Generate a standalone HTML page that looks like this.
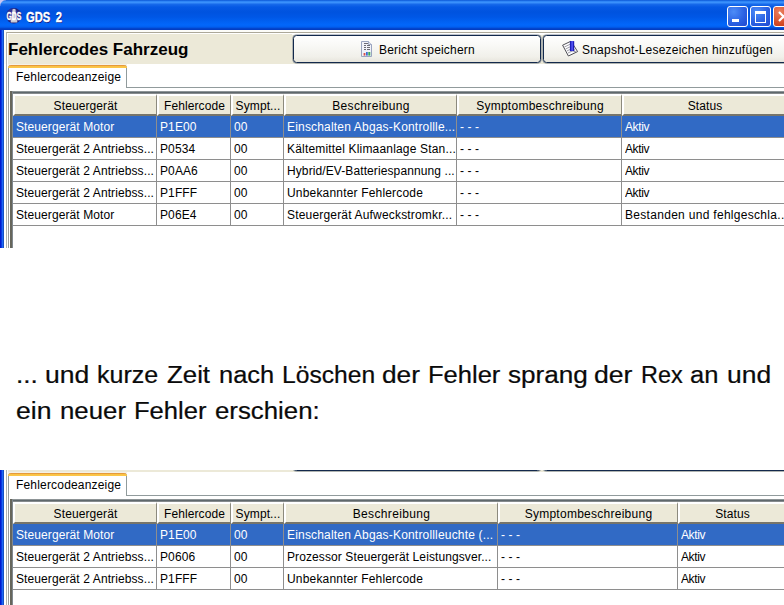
<!DOCTYPE html>
<html lang="de">
<head>
<meta charset="utf-8">
<title>GDS 2</title>
<style>
html,body{margin:0;padding:0;}
body{width:784px;height:605px;overflow:hidden;background:#fff;position:relative;font-family:"Liberation Sans",sans-serif;font-size:12px;color:#000;}
.abs{position:absolute;}
.shot{position:absolute;left:0;width:784px;overflow:hidden;background:#fff;}
#shot1{top:0;height:248px;}
#shot2{top:470px;height:135px;}
.inner{position:absolute;left:0;width:800px;height:260px;}
#shot1 .inner{top:0;}
#shot2 .inner{top:-62px;}
.titlebar{position:absolute;left:0;top:0;width:800px;height:30px;
 background:linear-gradient(180deg,#0a56d6 0px,#2f86f6 1.5px,#3a90fb 2.5px,#1568ea 4.5px,#0559e4 7px,#0053df 12px,#0057e6 17px,#0162f3 22px,#0267fb 25px,#025ff0 27px,#0345cc 28.5px,#0339bd 30px);}
.corner{position:absolute;left:0;top:0;width:6px;height:6px;background:radial-gradient(circle at 6px 6px,rgba(255,255,255,0) 5.2px,#c9c6f2 6.4px);}
.lborder{position:absolute;left:0;top:30px;width:4px;height:230px;background:linear-gradient(90deg,#0019cf 0,#0019cf 1px,#0a3ade 1px,#0a3ade 2px,#1f66f5 2px,#1f66f5 3px,#1450c4 3px,#1450c4 4px);}
.title{position:absolute;left:26px;top:9px;font-weight:bold;font-size:14px;color:#fff;text-shadow:1px 1px 0 #0a1883;white-space:nowrap;line-height:16px;word-spacing:3px;transform:scaleX(0.80);-webkit-text-stroke:0.35px #fff;transform-origin:0 0;}
.cbtn{position:absolute;top:6px;width:19px;height:19px;border:1px solid #fff;border-radius:3px;
 background:radial-gradient(circle at 30% 25%,#4d8cf7 0,#2b62e3 55%,#1f48cf 100%);}
.cbtn.close{background:radial-gradient(circle at 30% 25%,#ea8060 0,#d8502c 55%,#b8300e 100%);}
.client{position:absolute;left:4px;top:30px;width:796px;height:34px;background:#ece9d8;box-shadow:inset 2px 2px 0 #fcfcf8;}
.pane{position:absolute;left:4px;top:64px;width:796px;height:200px;background:#fff;}
.h1{position:absolute;left:8px;top:40px;font-weight:bold;font-size:17px;line-height:20px;white-space:nowrap;}
.btn{position:absolute;top:35px;height:26px;border:1px solid #13294c;border-radius:3.5px;box-shadow:0 0 0 0.5px rgba(19,41,76,0.55);background:linear-gradient(180deg,#ffffff 0,#f8f8f5 40%,#f1f0ea 80%,#e7e5dc 100%);}
.btn span{position:absolute;top:7px;line-height:14px;white-space:nowrap;letter-spacing:0.18px;}
.tab{position:absolute;left:8px;top:65px;width:119px;height:23px;background:#fff;border-right:1px solid #919b9c;border-left:1px solid #919b9c;box-sizing:border-box;border-radius:3px 3px 0 0;}
.tab:before{content:"";position:absolute;left:-1px;top:0;width:119px;height:3px;border-radius:3px 3px 0 0;background:linear-gradient(180deg,#e59a3c 0,#e59a3c 1px,#f9c144 1px,#fcc84a 3px);}
.tab span{position:absolute;left:7px;top:5px;line-height:14px;white-space:nowrap;letter-spacing:0.18px;}
.hdr{position:absolute;top:94px;height:22px;box-sizing:border-box;background:#ece9d8;border-left:2px solid #fff;border-top:2px solid #fff;border-bottom:2px solid #77756a;border-right:1px solid #8c8a7e;text-align:center;line-height:20px;white-space:nowrap;overflow:hidden;letter-spacing:0.1px;}
.vl{position:absolute;width:1px;background:#8e8e8e;}
.hl{position:absolute;left:13px;width:790px;height:1px;background:#8e8e8e;}
.row{position:absolute;left:13px;width:790px;height:21px;}
.sel{background:#316ac5;color:#fff;}
.c{position:absolute;top:0;line-height:22px;height:22px;white-space:nowrap;overflow:hidden;letter-spacing:0.1px;}
.para{position:absolute;font-size:26px;line-height:36px;white-space:nowrap;transform-origin:0 100%;color:#0a0a0a;-webkit-text-stroke:0.25px #0a0a0a;}
</style>
</head>
<body>
<div class="shot" id="shot1"><div class="inner">
<div class="titlebar"></div><div class="corner"></div><div class="lborder"></div>
<svg class="abs" style="left:5px;top:7px" width="18" height="18" viewBox="0 0 18 18">
   <circle cx="8.8" cy="8.7" r="7.7" fill="#20227e"/>
   <circle cx="7.5" cy="7" r="5.5" fill="#3b40a8" opacity="0.55"/>
   <path d="M7.4 2.4 Q9 1 10.6 2.4 L10.8 11 L12.4 13 L12.2 15.6 L5.8 15.6 L5.6 13 L7.2 11 Z" fill="#c9c9d4"/>
   <text x="8.9" y="12.9" font-family="Liberation Sans, sans-serif" font-weight="bold" font-size="10.6" fill="#fff" stroke="#fff" stroke-width="0.35" text-anchor="middle" textLength="14.8" lengthAdjust="spacingAndGlyphs">GDS</text>
  </svg>
<div class="title">GDS 2</div>
<div class="cbtn" style="left:727px"><i class="abs" style="left:4px;top:12px;width:7px;height:3px;background:#fff"></i></div>
<div class="cbtn" style="left:750px"><i class="abs" style="left:4px;top:4px;width:9px;height:8px;border:1px solid #fff;border-top-width:3px;box-sizing:content-box"></i></div>
<div class="cbtn close" style="left:773px"><svg class="abs" style="left:3px;top:3px" width="13" height="13"><path d="M2 2 L11 11 M11 2 L2 11" stroke="#fff" stroke-width="2.2"/></svg></div>
<div class="client"></div><div class="pane"></div>
<div class="abs" style="left:6px;top:32px;width:800px;height:1px;background:#aca899"></div>
<div class="abs" style="left:6px;top:32px;width:1px;height:230px;background:#b3b3b0"></div>
<div class="abs" style="left:7px;top:33px;width:800px;height:1px;background:#fff"></div>
<div class="abs" style="left:7px;top:33px;width:1px;height:31px;background:#fff"></div>
<div class="abs" style="left:8px;top:88px;width:1px;height:180px;background:#9a9c9c"></div>
<div class="abs" style="left:292px;top:34px;width:520px;height:1px;background:#fbfbf8"></div>
<div class="h1">Fehlercodes Fahrzeug</div>
<div class="btn" style="left:293px;width:246px"><svg class="abs" style="left:67px;top:5px" width="12" height="17" viewBox="0 0 12 17">
    <path d="M0.5 0.5 H7.5 L10.5 3.5 V15.5 H0.5 Z" fill="#f1f2f9" stroke="#9aa4c0"/>
    <path d="M7.5 0.5 V3.5 H10.5" fill="#dfe3f0" stroke="#8f9ab8" stroke-width="0.8"/>
    <path d="M3 2.5 H7 M3 4.5 H5 M6 4.5 H9 M3 6.5 H5 M6 6.5 H9 M3 8.5 H5 M6 8.5 H9" stroke="#6a6a74" stroke-width="1"/>
    <rect x="2.6" y="12" width="1.8" height="2.6" fill="#d8504a"/><rect x="5" y="11" width="1.8" height="3.6" fill="#3f6fd0"/><rect x="7.3" y="11" width="2" height="3.6" fill="#3cab54"/>
   </svg><span style="left:85px">Bericht speichern</span></div>
<div class="btn" style="left:543px;width:260px"><svg class="abs" style="left:18px;top:4px" width="18" height="18" viewBox="0 0 18 18">
    <path d="M0.6 5.2 L9 1.2 L15.6 11.6 L6.4 16 Z" fill="#fbfbfd" stroke="#3c3c44" stroke-width="0.9"/>
    <path d="M2.4 7 L8 4.3 M3.6 9 L9.2 6.3 M4.8 11 L10.4 8.3 M6 13 L13 9.7" stroke="#8a8a94" stroke-width="0.8"/>
    <path d="M11 10.5 L14.6 11.2 L12 12.6 Z" fill="#9a9aa4"/>
    <rect x="7.9" y="1.1" width="4.3" height="10" fill="#1d1db8"/>
    <rect x="9.3" y="1.1" width="1.6" height="9.6" fill="#5656f4"/>
   </svg><span style="left:38px;letter-spacing:0.22px">Snapshot-Lesezeichen hinzufügen</span></div>
<div class="abs" style="left:126px;top:87px;width:700px;height:1px;background:#919b9c"></div>
<div class="abs" style="left:8px;top:64px;width:119px;height:1px;background:#f5f1e6"></div>
<div class="tab"><span>Fehlercodeanzeige</span></div>
<div class="abs" style="left:10px;top:91px;width:800px;height:3px;background:linear-gradient(180deg,#8d9496 0,#8d9496 1px,#5f686c 1px,#5f686c 2px,#858a8c 2px,#858a8c 3px)"></div>
<div class="abs" style="left:10px;top:91px;width:3px;height:180px;background:linear-gradient(90deg,#66665c 0,#66665c 2px,#80888e 2px,#80888e 3px)"></div>
<div class="hdr" style="left:13px;width:144px">Steuergerät</div>
<div class="hdr" style="left:157px;width:74px">Fehlercode</div>
<div class="hdr" style="left:231px;width:53px">Sympt...</div>
<div class="hdr" style="left:284px;width:173px;letter-spacing:0.35px">Beschreibung</div>
<div class="hdr" style="left:457px;width:165px;letter-spacing:0.26px">Symptombeschreibung</div>
<div class="hdr" style="left:622px;width:165px">Status</div>
<div class="row sel" style="top:116px">
<span class="c" style="left:3px;width:140px">Steuergerät Motor</span>
<span class="c" style="left:147px;width:70px">P1E00</span>
<span class="c" style="left:221px;width:49px">00</span>
<span class="c" style="left:274px;width:169px;letter-spacing:0.18px">Einschalten Abgas-Kontrollle...</span>
<span class="c" style="left:447px;width:161px">- - -</span>
<span class="c" style="left:612px;width:161px;letter-spacing:-0.4px">Aktiv</span>
</div>
<div class="hl" style="top:137px"></div>
<div class="row" style="top:138px">
<span class="c" style="left:3px;width:140px">Steuergerät 2 Antriebss...</span>
<span class="c" style="left:147px;width:70px">P0534</span>
<span class="c" style="left:221px;width:49px">00</span>
<span class="c" style="left:274px;width:169px;letter-spacing:0.18px">Kältemittel Klimaanlage Stan...</span>
<span class="c" style="left:447px;width:161px">- - -</span>
<span class="c" style="left:612px;width:161px;letter-spacing:-0.4px">Aktiv</span>
</div>
<div class="hl" style="top:159px"></div>
<div class="row" style="top:160px">
<span class="c" style="left:3px;width:140px">Steuergerät 2 Antriebss...</span>
<span class="c" style="left:147px;width:70px">P0AA6</span>
<span class="c" style="left:221px;width:49px">00</span>
<span class="c" style="left:274px;width:169px">Hybrid/EV-Batteriespannung ...</span>
<span class="c" style="left:447px;width:161px">- - -</span>
<span class="c" style="left:612px;width:161px;letter-spacing:-0.4px">Aktiv</span>
</div>
<div class="hl" style="top:181px"></div>
<div class="row" style="top:182px">
<span class="c" style="left:3px;width:140px">Steuergerät 2 Antriebss...</span>
<span class="c" style="left:147px;width:70px">P1FFF</span>
<span class="c" style="left:221px;width:49px">00</span>
<span class="c" style="left:274px;width:169px;letter-spacing:0.18px">Unbekannter Fehlercode</span>
<span class="c" style="left:447px;width:161px">- - -</span>
<span class="c" style="left:612px;width:161px;letter-spacing:-0.4px">Aktiv</span>
</div>
<div class="hl" style="top:203px"></div>
<div class="row" style="top:204px">
<span class="c" style="left:3px;width:140px">Steuergerät Motor</span>
<span class="c" style="left:147px;width:70px">P06E4</span>
<span class="c" style="left:221px;width:49px">00</span>
<span class="c" style="left:274px;width:169px;letter-spacing:0.18px">Steuergerät Aufweckstromkr...</span>
<span class="c" style="left:447px;width:161px">- - -</span>
<span class="c" style="left:612px;width:161px;letter-spacing:0.3px">Bestanden und fehlgeschla...</span>
</div>
<div class="hl" style="top:225px"></div>
<div class="vl" style="left:156px;top:116px;height:109px"></div>
<div class="vl" style="left:230px;top:116px;height:109px"></div>
<div class="vl" style="left:283px;top:116px;height:109px"></div>
<div class="vl" style="left:456px;top:116px;height:109px"></div>
<div class="vl" style="left:621px;top:116px;height:109px"></div>
</div></div>
<div class="shot" id="shot2"><div class="inner">
<div class="titlebar"></div><div class="corner"></div><div class="lborder"></div>
<svg class="abs" style="left:5px;top:7px" width="18" height="18" viewBox="0 0 18 18">
   <circle cx="8.8" cy="8.7" r="7.7" fill="#20227e"/>
   <circle cx="7.5" cy="7" r="5.5" fill="#3b40a8" opacity="0.55"/>
   <path d="M7.4 2.4 Q9 1 10.6 2.4 L10.8 11 L12.4 13 L12.2 15.6 L5.8 15.6 L5.6 13 L7.2 11 Z" fill="#c9c9d4"/>
   <text x="8.9" y="12.9" font-family="Liberation Sans, sans-serif" font-weight="bold" font-size="10.6" fill="#fff" stroke="#fff" stroke-width="0.35" text-anchor="middle" textLength="14.8" lengthAdjust="spacingAndGlyphs">GDS</text>
  </svg>
<div class="title">GDS 2</div>
<div class="cbtn" style="left:727px"><i class="abs" style="left:4px;top:12px;width:7px;height:3px;background:#fff"></i></div>
<div class="cbtn" style="left:750px"><i class="abs" style="left:4px;top:4px;width:9px;height:8px;border:1px solid #fff;border-top-width:3px;box-sizing:content-box"></i></div>
<div class="cbtn close" style="left:773px"><svg class="abs" style="left:3px;top:3px" width="13" height="13"><path d="M2 2 L11 11 M11 2 L2 11" stroke="#fff" stroke-width="2.2"/></svg></div>
<div class="client"></div><div class="pane"></div>
<div class="abs" style="left:6px;top:32px;width:800px;height:1px;background:#aca899"></div>
<div class="abs" style="left:6px;top:32px;width:1px;height:230px;background:#b3b3b0"></div>
<div class="abs" style="left:7px;top:33px;width:800px;height:1px;background:#fff"></div>
<div class="abs" style="left:7px;top:33px;width:1px;height:31px;background:#fff"></div>
<div class="abs" style="left:8px;top:88px;width:1px;height:180px;background:#9a9c9c"></div>
<div class="abs" style="left:292px;top:34px;width:520px;height:1px;background:#fbfbf8"></div>
<div class="h1">Fehlercodes Fahrzeug</div>
<div class="btn" style="left:293px;width:246px"><svg class="abs" style="left:67px;top:5px" width="12" height="17" viewBox="0 0 12 17">
    <path d="M0.5 0.5 H7.5 L10.5 3.5 V15.5 H0.5 Z" fill="#f1f2f9" stroke="#9aa4c0"/>
    <path d="M7.5 0.5 V3.5 H10.5" fill="#dfe3f0" stroke="#8f9ab8" stroke-width="0.8"/>
    <path d="M3 2.5 H7 M3 4.5 H5 M6 4.5 H9 M3 6.5 H5 M6 6.5 H9 M3 8.5 H5 M6 8.5 H9" stroke="#6a6a74" stroke-width="1"/>
    <rect x="2.6" y="12" width="1.8" height="2.6" fill="#d8504a"/><rect x="5" y="11" width="1.8" height="3.6" fill="#3f6fd0"/><rect x="7.3" y="11" width="2" height="3.6" fill="#3cab54"/>
   </svg><span style="left:85px">Bericht speichern</span></div>
<div class="btn" style="left:543px;width:260px"><svg class="abs" style="left:18px;top:4px" width="18" height="18" viewBox="0 0 18 18">
    <path d="M0.6 5.2 L9 1.2 L15.6 11.6 L6.4 16 Z" fill="#fbfbfd" stroke="#3c3c44" stroke-width="0.9"/>
    <path d="M2.4 7 L8 4.3 M3.6 9 L9.2 6.3 M4.8 11 L10.4 8.3 M6 13 L13 9.7" stroke="#8a8a94" stroke-width="0.8"/>
    <path d="M11 10.5 L14.6 11.2 L12 12.6 Z" fill="#9a9aa4"/>
    <rect x="7.9" y="1.1" width="4.3" height="10" fill="#1d1db8"/>
    <rect x="9.3" y="1.1" width="1.6" height="9.6" fill="#5656f4"/>
   </svg><span style="left:38px;letter-spacing:0.22px">Snapshot-Lesezeichen hinzufügen</span></div>
<div class="abs" style="left:126px;top:87px;width:700px;height:1px;background:#919b9c"></div>
<div class="abs" style="left:8px;top:64px;width:119px;height:1px;background:#f5f1e6"></div>
<div class="tab"><span>Fehlercodeanzeige</span></div>
<div class="abs" style="left:10px;top:91px;width:800px;height:3px;background:linear-gradient(180deg,#8d9496 0,#8d9496 1px,#5f686c 1px,#5f686c 2px,#858a8c 2px,#858a8c 3px)"></div>
<div class="abs" style="left:10px;top:91px;width:3px;height:180px;background:linear-gradient(90deg,#66665c 0,#66665c 2px,#80888e 2px,#80888e 3px)"></div>
<div class="hdr" style="left:13px;width:144px">Steuergerät</div>
<div class="hdr" style="left:157px;width:74px">Fehlercode</div>
<div class="hdr" style="left:231px;width:53px">Sympt...</div>
<div class="hdr" style="left:284px;width:214px;letter-spacing:0.35px">Beschreibung</div>
<div class="hdr" style="left:498px;width:180px;letter-spacing:0.26px">Symptombeschreibung</div>
<div class="hdr" style="left:678px;width:108px">Status</div>
<div class="row sel" style="top:116px">
<span class="c" style="left:3px;width:140px">Steuergerät Motor</span>
<span class="c" style="left:147px;width:70px">P1E00</span>
<span class="c" style="left:221px;width:49px">00</span>
<span class="c" style="left:274px;width:210px;letter-spacing:0.18px">Einschalten Abgas-Kontrollleuchte (...</span>
<span class="c" style="left:488px;width:176px">- - -</span>
<span class="c" style="left:668px;width:104px;letter-spacing:-0.4px">Aktiv</span>
</div>
<div class="hl" style="top:137px"></div>
<div class="row" style="top:138px">
<span class="c" style="left:3px;width:140px">Steuergerät 2 Antriebss...</span>
<span class="c" style="left:147px;width:70px">P0606</span>
<span class="c" style="left:221px;width:49px">00</span>
<span class="c" style="left:274px;width:210px">Prozessor Steuergerät Leistungsver...</span>
<span class="c" style="left:488px;width:176px">- - -</span>
<span class="c" style="left:668px;width:104px;letter-spacing:-0.4px">Aktiv</span>
</div>
<div class="hl" style="top:159px"></div>
<div class="row" style="top:160px">
<span class="c" style="left:3px;width:140px">Steuergerät 2 Antriebss...</span>
<span class="c" style="left:147px;width:70px">P1FFF</span>
<span class="c" style="left:221px;width:49px">00</span>
<span class="c" style="left:274px;width:210px;letter-spacing:0.18px">Unbekannter Fehlercode</span>
<span class="c" style="left:488px;width:176px">- - -</span>
<span class="c" style="left:668px;width:104px;letter-spacing:-0.4px">Aktiv</span>
</div>
<div class="hl" style="top:181px"></div>
<div class="vl" style="left:156px;top:116px;height:65px"></div>
<div class="vl" style="left:230px;top:116px;height:65px"></div>
<div class="vl" style="left:283px;top:116px;height:65px"></div>
<div class="vl" style="left:497px;top:116px;height:65px"></div>
<div class="vl" style="left:677px;top:116px;height:65px"></div>
</div></div>
<div id="p1"><span class="para" style="left:15.6px;top:355px;transform:scale(1.006,0.93)">...</span> <span class="para" style="left:45.2px;top:355px;transform:scale(1.020,0.93)">und</span> <span class="para" style="left:97.2px;top:355px;transform:scale(0.963,0.93)">kurze</span> <span class="para" style="left:166.5px;top:355px;transform:scale(0.993,0.93)">Zeit</span> <span class="para" style="left:218.9px;top:355px;transform:scale(0.978,0.93)">nach</span> <span class="para" style="left:281.7px;top:355px;transform:scale(0.947,0.93)">Löschen</span> <span class="para" style="left:382.1px;top:355px;transform:scale(1.011,0.93)">der</span> <span class="para" style="left:428.3px;top:355px;transform:scale(0.982,0.93)">Fehler</span> <span class="para" style="left:508.1px;top:355px;transform:scale(1.005,0.93)">sprang</span> <span class="para" style="left:594.1px;top:355px;transform:scale(1.024,0.93)">der</span> <span class="para" style="left:640.6px;top:355px;transform:scale(0.900,0.93)">Rex</span> <span class="para" style="left:690.0px;top:355px;transform:scale(0.981,0.93)">an</span> <span class="para" style="left:726.8px;top:355px;transform:scale(1.017,0.93)">und</span></div>
<div id="p2"><span class="para" style="left:15.9px;top:391px;transform:scale(1.021,0.93)">ein</span> <span class="para" style="left:59.8px;top:391px;transform:scale(0.992,0.93)">neuer</span> <span class="para" style="left:133.9px;top:391px;transform:scale(0.983,0.93)">Fehler</span> <span class="para" style="left:214.8px;top:391px;transform:scale(0.992,0.93)">erschien:</span></div>
</body>
</html>
